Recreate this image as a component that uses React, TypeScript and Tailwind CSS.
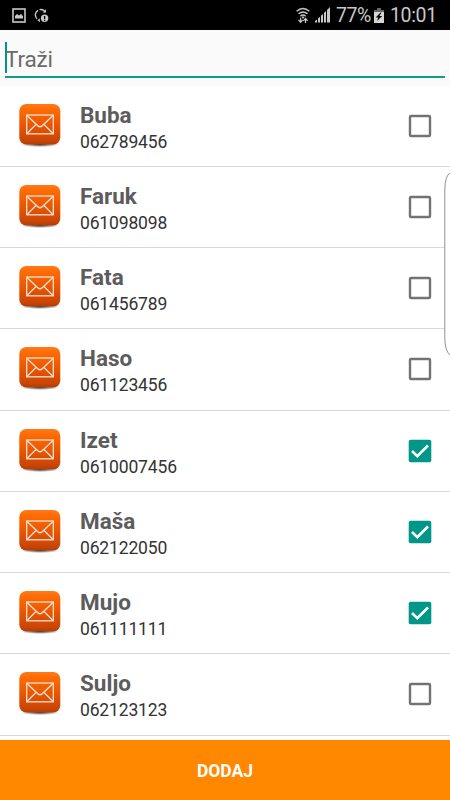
const contacts = [
  { name: 'Buba', phone: '062789456', checked: false },
  { name: 'Faruk', phone: '061098098', checked: false },
  { name: 'Fata', phone: '061456789', checked: false },
  { name: 'Haso', phone: '061123456', checked: false },
  { name: 'Izet', phone: '0610007456', checked: true },
  { name: 'Maša', phone: '062122050', checked: true },
  { name: 'Mujo', phone: '061111111', checked: true },
  { name: 'Suljo', phone: '062123123', checked: false },
];

function StatusBar() {
  return (
    <header className="flex h-[30px] shrink-0 items-center bg-black text-[#c8c8c8]">
      <svg className="ml-3 h-[15px] w-[14px]" viewBox="0 0 14 15" fill="none">
        <rect x="1" y="1" width="12" height="13" stroke="currentColor" strokeWidth="1.6" />
        <path d="M3 10.5V8l2-2 2 1.5L9 6l2 2.2v2.3z" fill="currentColor" />
      </svg>
      <svg className="ml-2 h-[15px] w-[15px]" viewBox="0 0 15 15" fill="none">
        <path d="M3 10.8A5.4 5.4 0 0 1 4 2.3M5.5 1.6A5.4 5.4 0 0 1 11.3 4.2" stroke="currentColor" strokeWidth="1.4" />
        <path d="M8.6 4.6h3.4V1.2M5.8 10.2v4L3.4 12.3z" fill="currentColor" />
        <circle cx="10.6" cy="10.3" r="3.7" fill="currentColor" />
        <path d="M10.6 8v3M10.6 11.8v1.2" stroke="black" strokeWidth="1.3" />
      </svg>
      <svg className="ml-auto h-[17px] w-[14px]" viewBox="0 0 14 17" fill="none">
        <path d="M.6 4.3Q7-1.2 13.4 4.3M2.5 6.8Q7 3 11.5 6.8M4.4 9.2Q7 7 9.6 9.2" stroke="currentColor" strokeWidth="1.4" />
        <path d="M7 9l1.3 1.5L7 11.8l-1.3-1.3z" fill="currentColor" />
        <path d="M4.6 10.8v4.4M2.5 12.9l2.1 2.5 2.1-2.5M9.5 16v-4.4M7.4 13.8l2.1-2.4 2.1 2.4" stroke="currentColor" strokeWidth="1.2" />
      </svg>
      <svg className="ml-[5px] h-[16px] w-[15px]" viewBox="0 0 15 16" fill="currentColor">
        <path d="M0 15.5V14l2-1.5v3zM3 11.5l2-1.8v5.8H3zM6 8.8L8 7v8.5H6zM9 6l2-2v11.5H9zM12 3l3-3v15.5h-3z" />
      </svg>
      <span className="ml-[6px] w-[35px] pt-[2px] text-[19.5px] leading-[30px] tracking-[-0.5px] whitespace-nowrap">77%</span>
      <svg className="ml-[3px] h-[15px] w-[10px]" viewBox="0 0 10 15">
        <path d="M3 0h4v2h3v3H0V2h3z" fill="#666" />
        <path d="M0 4h10v11H0z" fill="#d5d5d5" />
        <path d="M6.5 4.6L1.7 9.500h2.600L3 13l5.200-5H5.400l2-3.400z" fill="black" />
      </svg>
      <span className="mr-[14px] ml-[6px] w-[46px] pt-[2px] text-[19.5px] leading-[30px] tracking-[-0.35px] whitespace-nowrap">10:01</span>
    </header>
  );
}

function EnvelopeIcon() {
  return (
    <svg className="ml-[18px] h-[46px] w-[44px] shrink-0" viewBox="0 0 44 46">
      <defs>
        <linearGradient id="tile" x1="0" y1="0" x2="0" y2="1">
          <stop offset="0" stopColor="#ff7a1c" />
          <stop offset="0.12" stopColor="#ff6d05" />
          <stop offset="0.5" stopColor="#ea5803" />
          <stop offset="0.9" stopColor="#c94505" />
          <stop offset="1" stopColor="#b03c08" />
        </linearGradient>
        <radialGradient id="shade">
          <stop offset="0" stopColor="#000" stopOpacity="0.8" />
          <stop offset="1" stopColor="#000" stopOpacity="0" />
        </radialGradient>
      </defs>
      <ellipse cx="22" cy="41.500" rx="19" ry="2.600" fill="url(#shade)" />
      <rect x="1.300" y="1" width="41" height="40.500" rx="7" fill="url(#tile)" />
      <g fill="none" stroke="#ffe0d0" strokeWidth="1.300">
        <rect x="8.700" y="12" width="26.600" height="18.800" />
        <path d="M9 12.500l10.800 10.200q2.200 2 4.400 0L35 12.500M9 30.500l9.200-9.200M35 30.500l-9.200-9.200" />
      </g>
    </svg>
  );
}

function CheckBox({ checked }: { checked: boolean }) {
  return (
    <svg className="mr-[18px] h-6 w-6 shrink-0" viewBox="0 0 24 24" role="checkbox" aria-checked={checked}>
      {checked ? (
        <>
          <rect x="0.700" y="0.700" width="22.600" height="22.600" rx="2" fill="#009688" />
          <path d="M4 12l5.300 5.200L20 6.500" fill="none" stroke="white" strokeWidth="2.600" />
        </>
      ) : (
        <rect x="2" y="2" width="20" height="20" rx="1" fill="none" stroke="#737373" strokeWidth="2.400" />
      )}
    </svg>
  );
}

export default function App() {
  return (
    <div className="relative flex h-[800px] w-[450px] flex-col overflow-hidden bg-white font-['Roboto',sans-serif]">
      <StatusBar />
      <div className="h-[55.5px] shrink-0 bg-[#fafafa] px-[5px] pt-[12px]">
        <div className="flex h-[35.5px] items-start border-b-[2.5px] border-[#159b8c]">
          <span className="h-[31px] w-[2px] bg-[#009688]" />
          <span className="-ml-[2px] text-[22.5px] leading-[34px] tracking-[-0.15px] text-[#6b6b6b]">Traži</span>
        </div>
      </div>
      <main className="flex min-h-0 flex-1 flex-col overflow-hidden bg-white">
        {contacts.map((contact) => (
          <div key={contact.name} className="flex h-[81.25px] shrink-0 items-center border-b border-[#d8d8d8]">
            <EnvelopeIcon />
            <div className="ml-[18px] flex flex-1 flex-col pt-[5px]">
              <span className="text-[22.5px] leading-[27px] font-bold text-[#5c5c5c]">{contact.name}</span>
              <span className="text-[17.5px] leading-[26px] tracking-[-0.15px] text-[#333]">{contact.phone}</span>
            </div>
            <CheckBox checked={contact.checked} />
          </div>
        ))}
      </main>
      <button className="h-[60px] shrink-0 bg-[#ff8800] pt-[2px] text-[17.5px] font-bold text-white">DODAJ</button>
      <svg className="absolute top-[172px] right-0 h-[184px] w-[6px]" viewBox="0 0 6 184">
        <path d="M6.500 .5Q.8 4 .8 18V166Q.8 179 6.500 183.500" fill="white" stroke="#858585" strokeWidth="0.900" />
      </svg>
    </div>
  );
}
